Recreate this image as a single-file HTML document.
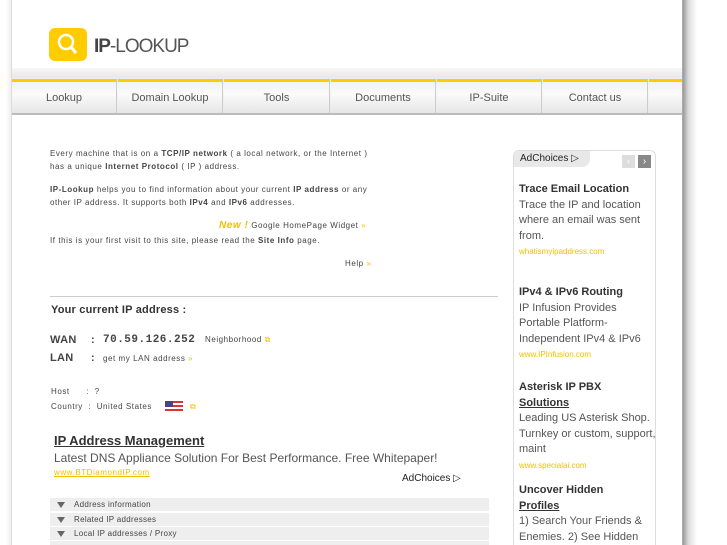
<!DOCTYPE html>
<html><head><meta charset="utf-8"><style>
*{margin:0;padding:0;box-sizing:border-box}
body{width:727px;height:545px;overflow:hidden;background:#fff;font-family:"Liberation Sans",sans-serif;position:relative;color:#444}
#shadowR{position:absolute;left:683px;top:0;width:14px;height:545px;background:linear-gradient(90deg,#999,#ddd 40%,#fff)}
#shadowL{position:absolute;left:6px;top:0;width:5px;height:545px;background:linear-gradient(90deg,#fff,#eee)}
#page{position:absolute;left:11px;top:0;width:672px;height:545px;background:#fff;border-left:1px solid #ddd;border-right:1px solid #aaa;overflow:hidden}
.logo{position:absolute;left:37px;top:28px;width:38px;height:33px;background:#ffcc00;border-radius:6px}
.brand{position:absolute;left:82px;top:36px;font-size:19px;color:#555;letter-spacing:-1px}
.brand b{color:#444}
#nav{position:absolute;left:0;top:68px;width:671px;height:47px;background:linear-gradient(#f7f7f7,#e9e9e9 20%,#f8f8f8 45%,#e8e8e8);border-bottom:2px solid #bbb}
.tab{position:absolute;top:11px;height:34px;border-top:3px solid #ffcc00;border-right:1px solid #ccc;font-size:11px;color:#555;text-align:center;line-height:33px;background:linear-gradient(#f2f2f2,#fafafa 40%,#e6e6e6)}
.t{position:absolute;font-size:8px;color:#444;white-space:nowrap;letter-spacing:.55px}
.y{color:#f0c000}
.acc{position:absolute;left:38px;width:439px;height:13px;background:#eee;font-size:8px;line-height:13px;padding-left:24px;color:#444;letter-spacing:.3px}
.acc:before{content:"";position:absolute;left:7px;top:4px;border:4px solid transparent;border-top:6px solid #666}
#side{position:absolute;left:501px;top:150px;width:143px;height:400px;border:1px solid #ddd;border-radius:6px}
.s{position:absolute;left:5px;font-size:11px;line-height:15.5px;color:#555;width:137px}
.s b{color:#333}
.u{font-size:8px;color:#f0c000}
</style></head><body>
<div id="shadowL"></div><div id="shadowR"></div>
<div id="page">
<div class="logo"><svg width="38" height="33"><circle cx="17" cy="14" r="7" fill="none" stroke="#fff" stroke-width="2.5"/><line x1="22" y1="19" x2="27" y2="25" stroke="#fff" stroke-width="3"/></svg></div>
<div class="brand"><b>IP</b>-LOOKUP</div>
<div id="nav">
<div class="tab" style="left:0;width:105px">Lookup</div>
<div class="tab" style="left:106px;width:105px">Domain Lookup</div>
<div class="tab" style="left:212px;width:106px">Tools</div>
<div class="tab" style="left:319px;width:105px">Documents</div>
<div class="tab" style="left:425px;width:105px">IP-Suite</div>
<div class="tab" style="left:531px;width:105px">Contact us</div>
<div class="tab" style="left:637px;width:40px;border-right:none"></div>
</div>
<div class="t" style="left:38px;top:149px">Every machine that is on a <b>TCP/IP network</b> ( a local network, or the Internet )</div>
<div class="t" style="left:38px;top:162px">has a unique <b>Internet Protocol</b> ( IP ) address.</div>
<div class="t" style="left:38px;top:185px"><b>IP-Lookup</b> helps you to find information about your current <b>IP address</b> or any</div>
<div class="t" style="left:38px;top:198px">other IP address. It supports both <b>IPv4</b> and <b>IPv6</b> addresses.</div>
<div class="t" style="left:207px;top:220px"><b class="y" style="font-size:10px;font-style:italic">New !</b> Google HomePage Widget <span class="y">»</span></div>
<div class="t" style="left:38px;top:236px">If this is your first visit to this site, please read the <b>Site Info</b> page.</div>
<div class="t" style="left:333px;top:259px">Help <span class="y">»</span></div>
<div style="position:absolute;left:38px;top:296px;width:448px;border-top:1px solid #ccc"></div>
<div class="t" style="left:39px;top:304px;font-size:11px;font-weight:bold;color:#333;letter-spacing:.2px">Your current IP address :</div>
<div class="t" style="left:38px;top:334px;font-size:11px;font-weight:bold;letter-spacing:.3px">WAN</div>
<div class="t" style="left:79px;top:334px;font-size:11px;font-weight:bold">:</div>
<div class="t" style="left:91px;top:334px;font-size:11px;font-weight:bold;font-family:'Liberation Mono',monospace;letter-spacing:.5px">70.59.126.252</div>
<div class="t" style="left:193px;top:335px">Neighborhood <span class="y">⧉</span></div>
<div class="t" style="left:38px;top:352px;font-size:11px;font-weight:bold;letter-spacing:.3px">LAN</div>
<div class="t" style="left:79px;top:352px;font-size:11px;font-weight:bold">:</div>
<div class="t" style="left:91px;top:354px">get my LAN address <span class="y">»</span></div>
<div class="t" style="left:39px;top:387px">Host &nbsp;&nbsp;&nbsp;&nbsp;&nbsp;: &nbsp;?</div>
<div class="t" style="left:39px;top:402px">Country &nbsp;: &nbsp;United States</div>
<div style="position:absolute;left:153px;top:401px;width:18px;height:12px;background:repeating-linear-gradient(#d33 0 2px,#fff 2px 4px)"><div style="width:8px;height:6px;background:#448"></div></div>
<div class="t" style="left:178px;top:402px"><span class="y">⧉</span></div>
<div class="t" style="left:42px;top:433px;font-size:13px;font-weight:bold;text-decoration:underline;color:#333;letter-spacing:0">IP Address Management</div>
<div class="t" style="left:42px;top:451px;font-size:12px;color:#555;letter-spacing:0">Latest DNS Appliance Solution For Best Performance. Free Whitepaper!</div>
<div class="t" style="left:42px;top:468px;text-decoration:underline;color:#f0c000">www.BTDiamondIP.com</div>
<div class="t" style="left:390px;top:473px;font-size:10px;color:#222;letter-spacing:0">AdChoices ▷</div>
<div class="acc" style="top:498px">Address information</div>
<div class="acc" style="top:513px">Related IP addresses</div>
<div class="acc" style="top:527px">Local IP addresses / Proxy</div>
<div class="acc" style="top:541px"></div>
<div id="side">
<div style="position:absolute;left:0;top:0;width:76px;height:16px;background:#e8e8e8;border-radius:6px 0 8px 0;font-size:10px;color:#222;padding:2px 6px">AdChoices ▷</div>
<div style="position:absolute;left:108px;top:4px;width:13px;height:13px;background:#ddd;color:#fff;font-size:10px;text-align:center;line-height:13px">‹</div>
<div style="position:absolute;left:124px;top:4px;width:13px;height:13px;background:#888;color:#fff;font-size:10px;text-align:center;line-height:13px">›</div>
<div class="s" style="top:31px"><b>Trace Email Location</b><br>Trace the IP and location where an email was sent from.<br><span class="u">whatismyipaddress.com</span></div>
<div class="s" style="top:134px"><b>IPv4 &amp; IPv6 Routing</b><br>IP Infusion Provides Portable Platform-Independent IPv4 &amp; IPv6<br><span class="u">www.IPInfusion.com</span></div>
<div class="s" style="top:229px"><b>Asterisk IP PBX<br><u>Solutions</u></b><br>Leading US Asterisk Shop. Turnkey or custom, support, maint<br><span class="u">www.specialai.com</span></div>
<div class="s" style="top:332px"><b>Uncover Hidden<br><u>Profiles</u></b><br>1) Search Your Friends &amp; Enemies. 2) See Hidden</div>
</div>
</div>
</body></html>
